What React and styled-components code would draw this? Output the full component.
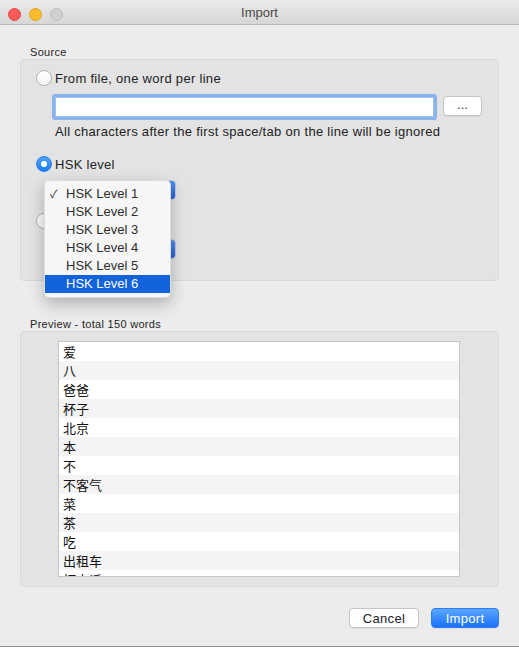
import React from 'react';
import styled, { createGlobalStyle } from 'styled-components';

const GlobalStyle = createGlobalStyle`
  html, body {
    margin: 0;
    padding: 0;
    background: #ececec;
  }
  body {
    font-family: "Liberation Sans", Arial, "Noto Sans CJK SC", sans-serif;
    font-size: 13px;
    color: #222;
  }
`;

const Window = styled.div`
  width: 519px;
  height: 647px;
  box-sizing: border-box;
  background: #ececec;
  border-radius: 5px 5px 0 0;
  border-bottom: 1px solid #8d8d8d;
  display: flex;
  flex-direction: column;
  overflow: hidden;
`;

const TitleBar = styled.div`
  position: relative;
  height: 24px;
  flex: none;
  background: linear-gradient(#ebebeb, #d6d6d6);
  border-bottom: 1px solid #b8b8b8;
  display: flex;
  align-items: center;
  justify-content: center;
  color: #4a4a4a;
  font-size: 13px;
`;

const Lights = styled.div`
  position: absolute;
  left: 8px;
  top: 8px;
  display: flex;
  gap: 8px;
`;

const Light = styled.span`
  width: 11px;
  height: 11px;
  border-radius: 50%;
  background: ${p => p.$fill};
  border: 0.5px solid ${p => p.$edge};
`;

const Content = styled.div`
  padding: 0 20px;
  display: flex;
  flex-direction: column;
`;

const GroupLabel = styled.div`
  font-size: 11px;
  line-height: 14px;
  letter-spacing: 0.3px;
  padding-left: 10px;
  margin-top: ${p => p.$top}px;
  color: #262626;
`;

const GroupBox = styled.div`
  position: relative;
  background: #e3e3e3;
  border: 1px solid #d9d9d9;
  border-radius: 4px;
  box-sizing: border-box;
  height: ${p => p.$height}px;
  display: flex;
  flex-direction: column;
`;

const SourceBody = styled.div`
  padding: 9px 16px 0 15px;
  display: flex;
  flex-direction: column;
  letter-spacing: 0.3px;
`;

const RadioRow = styled.label`
  display: flex;
  align-items: center;
  gap: 3px;
  height: 18px;
  margin-top: ${p => p.$top || 0}px;
`;

const RadioCircle = styled.span`
  width: 16px;
  height: 16px;
  box-sizing: border-box;
  border-radius: 50%;
  flex: none;
  display: flex;
  align-items: center;
  justify-content: center;
  background: ${p => (p.$checked ? 'linear-gradient(#4ea2fb, #1b7bf4)' : 'linear-gradient(#ffffff, #f6f6f6)')};
  border: 1px solid ${p => (p.$checked ? '#2a82ee' : '#b3b3b3')};
  &::after {
    content: '';
    width: 6px;
    height: 6px;
    border-radius: 50%;
    background: #fff;
    display: ${p => (p.$checked ? 'block' : 'none')};
  }
`;

const Indented = styled.div`
  padding-left: 19px;
  margin-top: ${p => p.$top || 0}px;
  display: flex;
  align-items: center;
`;

const FileInput = styled.div`
  width: 379px;
  height: 20px;
  box-sizing: border-box;
  background: #fff;
  border: 1px solid #9fc2ee;
  box-shadow: 0 0 0 3px rgba(107, 163, 236, 0.75);
  border-radius: 1px;
`;

const SmallButton = styled.button`
  margin-left: 9px;
  width: 39px;
  height: 20px;
  margin-top: -2px;
  padding: 0 0 4px;
  background: #fff;
  border: 1px solid #c4c4c4;
  border-radius: 4px;
  font-family: inherit;
  font-size: 13px;
  color: #333;
  box-shadow: 0 1px 0 rgba(0, 0, 0, 0.05);
`;

const HelpText = styled.div`
  line-height: 18px;
`;

const Select = styled.div`
  width: 121px;
  height: 20px;
  box-sizing: border-box;
  background: #fff;
  border: 1px solid #c6c6c6;
  border-radius: 4px;
  display: flex;
  align-items: center;
  overflow: hidden;
  padding-left: 8px;
`;

const SelectText = styled.span`
  flex: 1;
`;

const Stepper = styled.span`
  width: 16px;
  height: 100%;
  background: linear-gradient(#4f8ff8, #2c5ee8);
  display: flex;
  align-items: center;
  justify-content: center;
`;

const Menu = styled.div`
  position: absolute;
  left: 23px;
  top: 120px;
  width: 125px;
  padding: 4px 0;
  background: #f6f6f6;
  border: 1px solid rgba(0, 0, 0, 0.1);
  border-radius: 5px;
  box-shadow: 0 6px 16px rgba(0, 0, 0, 0.25);
  z-index: 5;
`;

const MenuItem = styled.div`
  position: relative;
  height: 18px;
  line-height: 18px;
  padding-left: 21px;
  font-size: 13px;
  color: ${p => (p.$active ? '#fff' : '#2d2d2d')};
  background: ${p => (p.$active ? '#1262dc' : 'transparent')};
`;

const Check = styled.span`
  position: absolute;
  left: 5px;
  top: 0;
  font-size: 11px;
`;

const PreviewBody = styled.div`
  padding: 9px 0 0 37px;
`;

const List = styled.div`
  width: 402px;
  height: 236px;
  box-sizing: border-box;
  border: 1px solid #c6c6c6;
  background: #fff;
  overflow: hidden;
`;

const Row = styled.div`
  height: 19px;
  line-height: 19px;
  padding-left: 4px;
  font-family: "Noto Sans CJK SC", sans-serif;
  font-size: 13px;
  color: #111;
  background: ${p => (p.$odd ? '#f4f4f4' : '#fff')};
`;

const Footer = styled.div`
  display: flex;
  justify-content: flex-end;
  gap: 12px;
  margin-top: 21px;
`;

const DialogButton = styled.button`
  width: ${p => p.$width}px;
  height: 20px;
  padding: 0;
  border-radius: 4px;
  font-family: inherit;
  font-size: 13px;
  letter-spacing: 0.3px;
  color: ${p => (p.$primary ? '#fff' : '#222')};
  background: ${p => (p.$primary ? 'linear-gradient(#5aa6fd, #1a72fb)' : '#fff')};
  border: 1px solid ${p => (p.$primary ? '#2f7df6' : '#c6c6c6')};
  box-shadow: 0 1px 0 rgba(0, 0, 0, 0.06);
`;

const words = ['爱', '八', '爸爸', '杯子', '北京', '本', '不', '不客气', '菜', '茶', '吃', '出租车', '打电话'];
const levels = [1, 2, 3, 4, 5, 6];

function StepperIcon() {
  return (
    <svg width="7" height="12" viewBox="0 0 7 12">
      <path d="M1 4.5 L3.5 2 L6 4.5 M1 7.5 L3.5 10 L6 7.5" stroke="#fff" strokeWidth="1.2" fill="none" />
    </svg>
  );
}

export default function App() {
  return (
    <>
      <GlobalStyle />
      <Window>
        <TitleBar>
          <Lights>
            <Light $fill="#fc5b57" $edge="#e0443e" />
            <Light $fill="#fdbc2f" $edge="#dea123" />
            <Light $fill="#d1d1d1" $edge="#bdbdbd" />
          </Lights>
          Import
        </TitleBar>
        <Content>
          <GroupLabel $top={20}>Source</GroupLabel>
          <GroupBox $height={222}>
            <SourceBody>
              <RadioRow>
                <RadioCircle />
                From file, one word per line
              </RadioRow>
              <Indented $top={10}>
                <FileInput />
                <SmallButton>...</SmallButton>
              </Indented>
              <Indented $top={6}>
                <HelpText>All characters after the first space/tab on the line will be ignored</HelpText>
              </Indented>
              <RadioRow $top={14}>
                <RadioCircle $checked />
                HSK level
              </RadioRow>
              <Indented $top={7}>
                <Select>
                  <SelectText>HSK Level 1</SelectText>
                  <Stepper><StepperIcon /></Stepper>
                </Select>
              </Indented>
              <RadioRow $top={12}>
                <RadioCircle />
                Word list
              </RadioRow>
              <Indented $top={9}>
                <Select>
                  <SelectText>Default</SelectText>
                  <Stepper><StepperIcon /></Stepper>
                </Select>
              </Indented>
            </SourceBody>
            <Menu>
              {levels.map(n => (
                <MenuItem key={n} $active={n === 6}>
                  {n === 1 && <Check>✓</Check>}
                  HSK Level {n}
                </MenuItem>
              ))}
            </Menu>
          </GroupBox>
          <GroupLabel $top={36}>Preview - total 150 words</GroupLabel>
          <GroupBox $height={256}>
            <PreviewBody>
              <List>
                {words.map((w, i) => (
                  <Row key={w} $odd={i % 2 === 1}>{w}</Row>
                ))}
              </List>
            </PreviewBody>
          </GroupBox>
          <Footer>
            <DialogButton $width={70}>Cancel</DialogButton>
            <DialogButton $width={68} $primary>Import</DialogButton>
          </Footer>
        </Content>
      </Window>
    </>
  );
}
